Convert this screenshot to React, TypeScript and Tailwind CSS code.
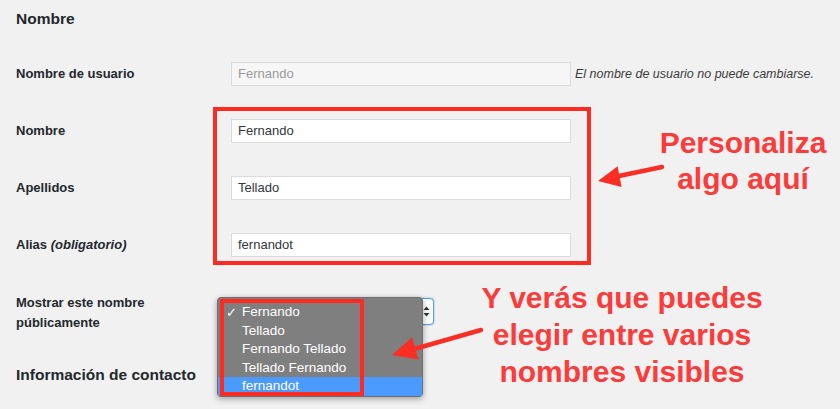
import React from 'react';

// Filas de texto del perfil
type Row = {
  label: React.ReactNode;
  value: string;
};

const rows: Row[] = [
  { label: 'Nombre', value: 'Fernando' },
  { label: 'Apellidos', value: 'Tellado' },
  {
    label: (
      <>
        Alias <em className="italic">(obligatorio)</em>
      </>
    ),
    value: 'fernandot',
  },
];

const options = ['Fernando', 'Tellado', 'Fernando Tellado', 'Tellado Fernando', 'fernandot'];

const App: React.FC = () => {
  return (
    <div
      className="relative w-[840px] h-[409px] overflow-hidden bg-[#f1f1f1] text-[#23282d]"
      style={{ fontFamily: '"Liberation Sans", Arial, sans-serif' }}
    >
      {/* encabezado */}
      <div className="h-[45.5px] pl-4 pt-[9px]">
        <h2 className="text-[15.5px] leading-5 font-semibold">Nombre</h2>
      </div>

      {/* nombre de usuario */}
      <div className="flex items-center h-[57px]">
        <label className="w-[231px] pl-4 text-[13px] font-semibold">Nombre de usuario</label>
        <div className="w-[340px] h-6 border border-[#dcdcdc] bg-[#f6f6f6] px-[6px] flex items-center text-[13px] text-[#9a9a9a]">
          Fernando
        </div>
        <span className="ml-1 text-[12.5px] italic text-[#3c3c3c]">El nombre de usuario no puede cambiarse.</span>
      </div>

      {rows.map((row, i) => (
        <div key={i} className="flex items-center h-[57px]">
          <label className="w-[231px] pl-4 text-[13px] font-semibold">{row.label}</label>
          <div className="w-[340px] h-6 border border-[#dcdcdc] bg-white px-[6px] flex items-center text-[13px] text-[#32373c]">
            {row.value}
          </div>
        </div>
      ))}

      {/* mostrar nombre */}
      <div className="flex items-start pt-[19px]">
        <label className="w-[231px] pl-4 text-[13px] leading-5 font-semibold">
          Mostrar este nombre
          <br />
          públicamente
        </label>
        <div className="mt-[5.5px] w-[203px] h-[27px] rounded-[4px] border border-[#5b9dd9] bg-white flex items-center justify-end pr-[3px] shadow-[0_0_2px_rgba(30,140,190,0.6)]">
          <svg width="7" height="13" viewBox="0 0 7 13">
            <path d="M0.5 5 L3.5 1.5 L6.5 5 Z" fill="#333" />
            <path d="M0.5 8 L3.5 11.5 L6.5 8 Z" fill="#333" />
          </svg>
        </div>
      </div>

      <div className="mt-[32.5px] pl-4">
        <h2 className="text-[15.5px] leading-5 font-semibold">Información de contacto</h2>
      </div>

      {/* menú desplegable abierto */}
      <div className="absolute left-[217px] top-[297px] w-[206px] h-[100px] rounded-[4px] bg-[#7f7f7f] pt-[5px] shadow-[0_2px_6px_rgba(0,0,0,0.35)] border border-[#6f6f6f]">
        {options.map((opt, i) => (
          <div
            key={opt}
            className={`h-[18.5px] flex items-center text-[13.5px] text-white ${
              i === options.length - 1 ? 'bg-[#4a9bfd]' : ''
            }`}
          >
            <span className="w-[24px] pl-[8px] text-[13px]">{i === 0 ? '✓' : ''}</span>
            {opt}
          </div>
        ))}
      </div>

      {/* recuadros rojos */}
      <div className="absolute left-[213px] top-[107px] w-[378px] h-[158px] border-4 border-[#ff2b22]" />
      <div className="absolute left-[220px] top-[299px] w-[144px] h-[97px] border-4 border-[#ff2b22]" />

      {/* flechas */}
      <svg className="absolute left-0 top-0" width="840" height="409">
        <line x1="662" y1="167" x2="614" y2="177" stroke="#fb2e26" strokeWidth="4.5" strokeLinecap="round" />
        <polygon points="598,181 621.6,187 617.6,166.2" fill="#fb2e26" />
        <line x1="481" y1="330" x2="409" y2="350.5" stroke="#fb2e26" strokeWidth="4.5" strokeLinecap="round" />
        <polygon points="392,355 418.5,359.5 412,337.5" fill="#fb2e26" />
      </svg>

      {/* textos de anotación */}
      <div className="absolute left-[643px] top-[125px] w-[200px] text-center text-[30px] leading-[36px] font-bold text-[#fc3b3b]">
        Personaliza
        <br />
        algo aquí
      </div>
      <div className="absolute left-[462px] top-[279px] w-[320px] text-center text-[30px] leading-[37px] font-bold text-[#fc3b3b]">
        Y verás que puedes
        <br />
        elegir entre varios
        <br />
        nombres visibles
      </div>
    </div>
  );
};

export default App;
